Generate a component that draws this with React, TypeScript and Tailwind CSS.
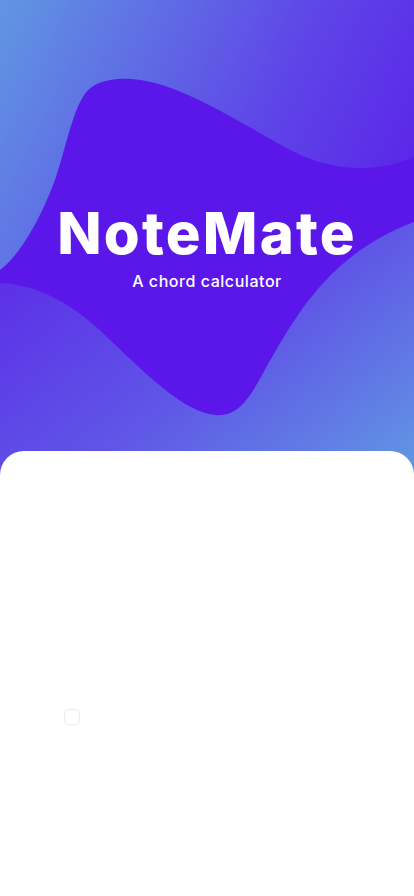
import React from 'react';

const Hero = () => {
  return (
    <div className="relative h-[475px] overflow-hidden">
      {/* background waves */}
      <svg className="absolute inset-0 h-full w-full" viewBox="0 0 414 475" preserveAspectRatio="none">
        <defs>
          <linearGradient id="bgA" x1="0" y1="0" x2="1" y2="0.55">
            <stop offset="0" stopColor="#6196e2" />
            <stop offset="0.6" stopColor="#5e45e7" />
            <stop offset="1" stopColor="#5a1ee9" />
          </linearGradient>
          <linearGradient id="bgB" x1="0" y1="0.2" x2="1" y2="1">
            <stop offset="0" stopColor="#5c2ee8" />
            <stop offset="0.5" stopColor="#5f56e6" />
            <stop offset="1" stopColor="#6198e3" />
          </linearGradient>
        </defs>
        <rect x="0" y="0" width="414" height="475" fill="url(#bgA)" />
        <path
          d="M0,270 C20,255 40,220 55,180 C70,135 75,95 95,85 C110,77 135,76 165,86 C210,101 260,135 300,155 C340,172 380,172 414,157 L414,475 L0,475 Z"
          fill="#5b17e9"
        />
        <path
          d="M0,283 C40,285 75,305 110,340 C150,378 185,412 215,415 C245,418 255,385 275,352 C305,300 340,250 414,222 L414,475 L0,475 Z"
          fill="url(#bgB)"
        />
      </svg>

      {/* title */}
      <div className="relative flex flex-col items-center pt-[197px] text-white">
        <h1
          className="text-[58px] font-extrabold leading-[72px] tracking-[2.2px]"
          style={{ fontFamily: 'Inter, "Noto Sans", sans-serif' }}
        >
          NoteMate
        </h1>
        <p
          className="mt-[1px] text-[16px] font-medium leading-[22px] tracking-[0.55px]"
          style={{ fontFamily: 'Inter, "Noto Sans", sans-serif' }}
        >
          A chord calculator
        </p>
      </div>
    </div>
  );
};

export default function App() {
  return (
    <div className="min-h-[896px] w-[414px] bg-white">
      <Hero />
      <div className="relative -mt-6 min-h-[445px] rounded-t-[24px] bg-white px-16 pt-[258px]">
        <label className="block h-4 w-4">
          <input type="checkbox" className="peer sr-only" />
          <span className="block h-4 w-4 rounded-[4px] border-[1.5px] border-[#ececec] bg-white" />
        </label>
      </div>
    </div>
  );
}
